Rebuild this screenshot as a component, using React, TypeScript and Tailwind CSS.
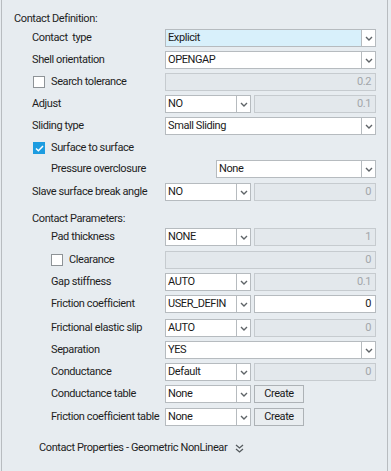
import type { ReactNode } from "react";

const FONT = { fontFamily: "Roboto, 'Liberation Sans', Arial, sans-serif" };

function Chevron() {
  return (
    <svg width="8" height="5" viewBox="0 0 8 5" className="text-[#5f6468]">
      <path d="M1 1 L4 4 L7 1" fill="none" stroke="currentColor" strokeWidth="1.4" />
    </svg>
  );
}

function Combo({ value, tint, w }: { value: string; tint?: boolean; w?: string }) {
  return (
    <div className={`flex h-[18px] ${w ?? "flex-1"}`}>
      <div
        className={`flex-1 min-w-0 flex items-center overflow-hidden whitespace-nowrap border border-[#b6bbbf] pl-[2px] text-[#1a1a1a] ${
          tint ? "bg-[#d8f0fb]" : "bg-white"
        }`}
      >
        {value}
      </div>
      <div className="w-[14px] shrink-0 grid place-items-center border border-l-0 border-[#b6bbbf] bg-white">
        <Chevron />
      </div>
    </div>
  );
}

function Num({ value, enabled }: { value: string; enabled?: boolean }) {
  return (
    <div
      className={`flex-1 h-[18px] flex items-center justify-end pr-[4px] border ${
        enabled ? "bg-white border-[#b6bbbf] text-[#1a1a1a]" : "bg-[#e3e8ec] border-[#c6cbcf] text-[#a2a6aa]"
      }`}
    >
      {value}
    </div>
  );
}

function Box({ checked }: { checked?: boolean }) {
  return checked ? (
    <span className="grid place-items-center w-[12px] h-[12px] shrink-0 bg-[#1d9ce0]">
      <svg width="9" height="7" viewBox="0 0 9 7">
        <path d="M1 3.5 L3.4 5.8 L8 1" fill="none" stroke="white" strokeWidth="1.5" />
      </svg>
    </span>
  ) : (
    <span className="w-[12px] h-[12px] shrink-0 bg-white border border-[#8e9397]" />
  );
}

function Row({
  label,
  pl,
  check,
  checked,
  children,
  mt = "mt-[4px]",
}: {
  label: string;
  pl: string;
  check?: boolean;
  checked?: boolean;
  children?: ReactNode;
  mt?: string;
}) {
  return (
    <div className={`flex h-[18px] items-center ${mt}`}>
      <div className={`w-[163px] shrink-0 flex items-center gap-[6px] whitespace-pre ${pl}`}>
        {check && <Box checked={checked} />}
        <span>{label}</span>
      </div>
      <div className="flex-1 flex items-center gap-[3px]">{children}</div>
    </div>
  );
}

function Create() {
  return (
    <div className="w-[50px] h-[18px] grid place-items-center border border-[#adb2b6] bg-[#e9edf0] text-[#1a1a1a]">
      Create
    </div>
  );
}

export default function App() {
  return (
    <div
      className="w-[391px] h-[471px] bg-[#e7ecf0] pl-[1px] text-[11px] tracking-[-0.4px] text-[#1e1e1e]"
      style={FONT}
    >
      <div className="w-[387px] h-full border-l border-r border-[#b8bcc0] pr-[11px] pt-[12px]">
        <div className="pl-[12px] leading-[14px]">Contact Definition:</div>
        <div className="mt-[3px]">
          <Row label="Contact  type" pl="pl-[30px]" mt="">
            <Combo value="Explicit" tint />
          </Row>
          <Row label="Shell orientation" pl="pl-[30px]">
            <Combo value="OPENGAP" />
          </Row>
          <Row label="Search tolerance" pl="pl-[31px]" check>
            <Num value="0.2" />
          </Row>
          <Row label="Adjust" pl="pl-[30px]">
            <Combo value="NO" w="w-[86px]" />
            <Num value="0.1" />
          </Row>
          <Row label="Sliding type" pl="pl-[30px]">
            <Combo value="Small Sliding" />
          </Row>
          <Row label="Surface to surface" pl="pl-[31px]" check checked />
          <div className="flex h-[18px] items-center mt-[3px]">
            <div className="w-[214px] shrink-0 pl-[49px]">Pressure overclosure</div>
            <Combo value="None" />
          </div>
          <Row label="Slave surface break angle" pl="pl-[30px]" mt="mt-[5px]">
            <Combo value="NO" w="w-[86px]" />
            <Num value="0" />
          </Row>
          <div className="pl-[30px] pt-[11px] leading-[14px]">Contact Parameters:</div>
          <Row label="Pad thickness" pl="pl-[49px]" mt="mt-[2px]">
            <Combo value="NONE" w="w-[86px]" />
            <Num value="1" />
          </Row>
          <Row label="Clearance" pl="pl-[49px]" check mt="mt-[5px]">
            <Num value="0" />
          </Row>
          <Row label="Gap stiffness" pl="pl-[49px]">
            <Combo value="AUTO" w="w-[86px]" />
            <Num value="0.1" />
          </Row>
          <Row label="Friction coefficient" pl="pl-[49px]">
            <Combo value="USER_DEFIN" w="w-[86px]" />
            <Num value="0" enabled />
          </Row>
          <Row label="Frictional elastic slip" pl="pl-[49px]" mt="mt-[6px]">
            <Combo value="AUTO" w="w-[86px]" />
            <Num value="0" />
          </Row>
          <Row label="Separation" pl="pl-[49px]">
            <Combo value="YES" />
          </Row>
          <Row label="Conductance" pl="pl-[49px]">
            <Combo value="Default" w="w-[86px]" />
            <Num value="0" />
          </Row>
          <Row label="Conductance table" pl="pl-[49px]">
            <Combo value="None" w="w-[86px]" />
            <Create />
          </Row>
          <Row label="Friction coefficient table" pl="pl-[49px]" mt="mt-[5px]">
            <Combo value="None" w="w-[86px]" />
            <Create />
          </Row>
        </div>
        <div className="mt-[15px] pl-[37px] flex items-center gap-[8px] leading-[14px]">
          <span>Contact Properties - Geometric NonLinear</span>
          <svg width="9" height="9" viewBox="0 0 9 9" className="text-[#555a5e]">
            <path d="M1 1 L4.5 4 L8 1 M1 5 L4.5 8 L8 5" fill="none" stroke="currentColor" strokeWidth="1.3" />
          </svg>
        </div>
      </div>
    </div>
  );
}
